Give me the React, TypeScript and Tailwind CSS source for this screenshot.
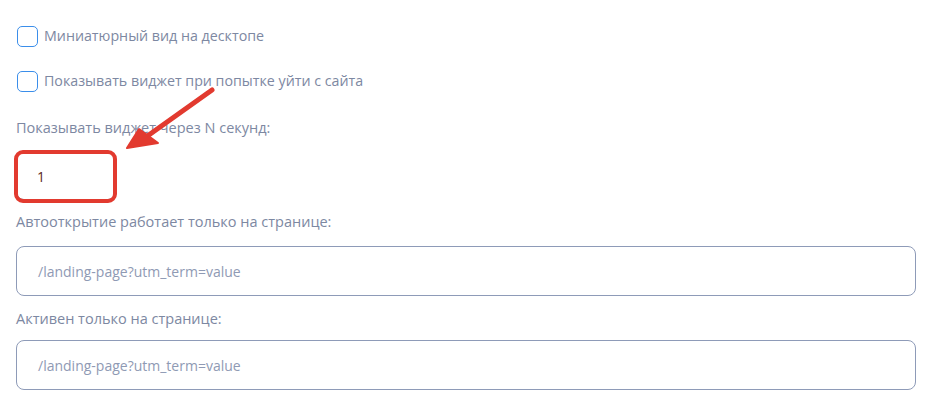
import React from "react";

const font = { fontFamily: '"Open Sans", "Noto Sans", sans-serif' };

function Check({ label }: { label: string }) {
  return (
    <label className="flex items-center gap-[6px] h-[22px]">
      <span className="w-[21px] h-[21px] rounded-[5px] border-[1.5px] border-[#3b8eea] bg-white ml-[1px]" />
      <span className="text-[14.25px] leading-[20px] text-[#7d88a2]">{label}</span>
    </label>
  );
}

export default function App() {
  return (
    <div className="relative w-[950px] h-[400px] bg-white pl-4 pr-[34px] overflow-hidden" style={font}>
      <div className="pt-[25px] flex flex-col">
        <Check label="Миниатюрный вид на десктопе" />
        <div className="h-[23px]" />
        <Check label="Показывать виджет при попытке уйти с сайта" />
        <div className="mt-[26px] text-[14.5px] leading-[20px] text-[#7d88a2]">Показывать виджет через N секунд:</div>
        <div className="relative mt-[14px] w-[100px] h-[48px]">
          <div className="w-full h-full rounded-[8px] border border-[#8e9bb8] bg-white flex items-center pl-[20px] text-[14px] text-[#5a2a20]">1</div>
          <div className="absolute -left-[2px] -top-[2px] w-[103px] h-[53px] rounded-[9px] border-[4px] border-[#e23a2f]" />
        </div>
        <div className="mt-[12px] text-[14.5px] leading-[20px] text-[#7d88a2]">Автооткрытие работает только на странице:</div>
        <div className="mt-[14px] w-[900px] h-[50px] rounded-[8px] border border-[#8e9bb8] flex items-center pl-[21px] text-[14px] text-[#8f9ab4]">/landing-page?utm_term=value</div>
        <div className="mt-[13px] text-[14.5px] leading-[20px] text-[#7d88a2]">Активен только на странице:</div>
        <div className="mt-[11px] w-[900px] h-[50px] rounded-[8px] border border-[#8e9bb8] flex items-center pl-[21px] text-[14px] text-[#8f9ab4]">/landing-page?utm_term=value</div>
      </div>
      <svg className="absolute left-0 top-0 pointer-events-none" width="950" height="400">
        <line x1="212" y1="90" x2="146" y2="137" stroke="#e23a2f" strokeWidth="5" strokeLinecap="round" />
        <polygon points="127,148 139,129 158,143" fill="#e23a2f" stroke="#e23a2f" strokeWidth="2" strokeLinejoin="round" />
      </svg>
    </div>
  );
}
